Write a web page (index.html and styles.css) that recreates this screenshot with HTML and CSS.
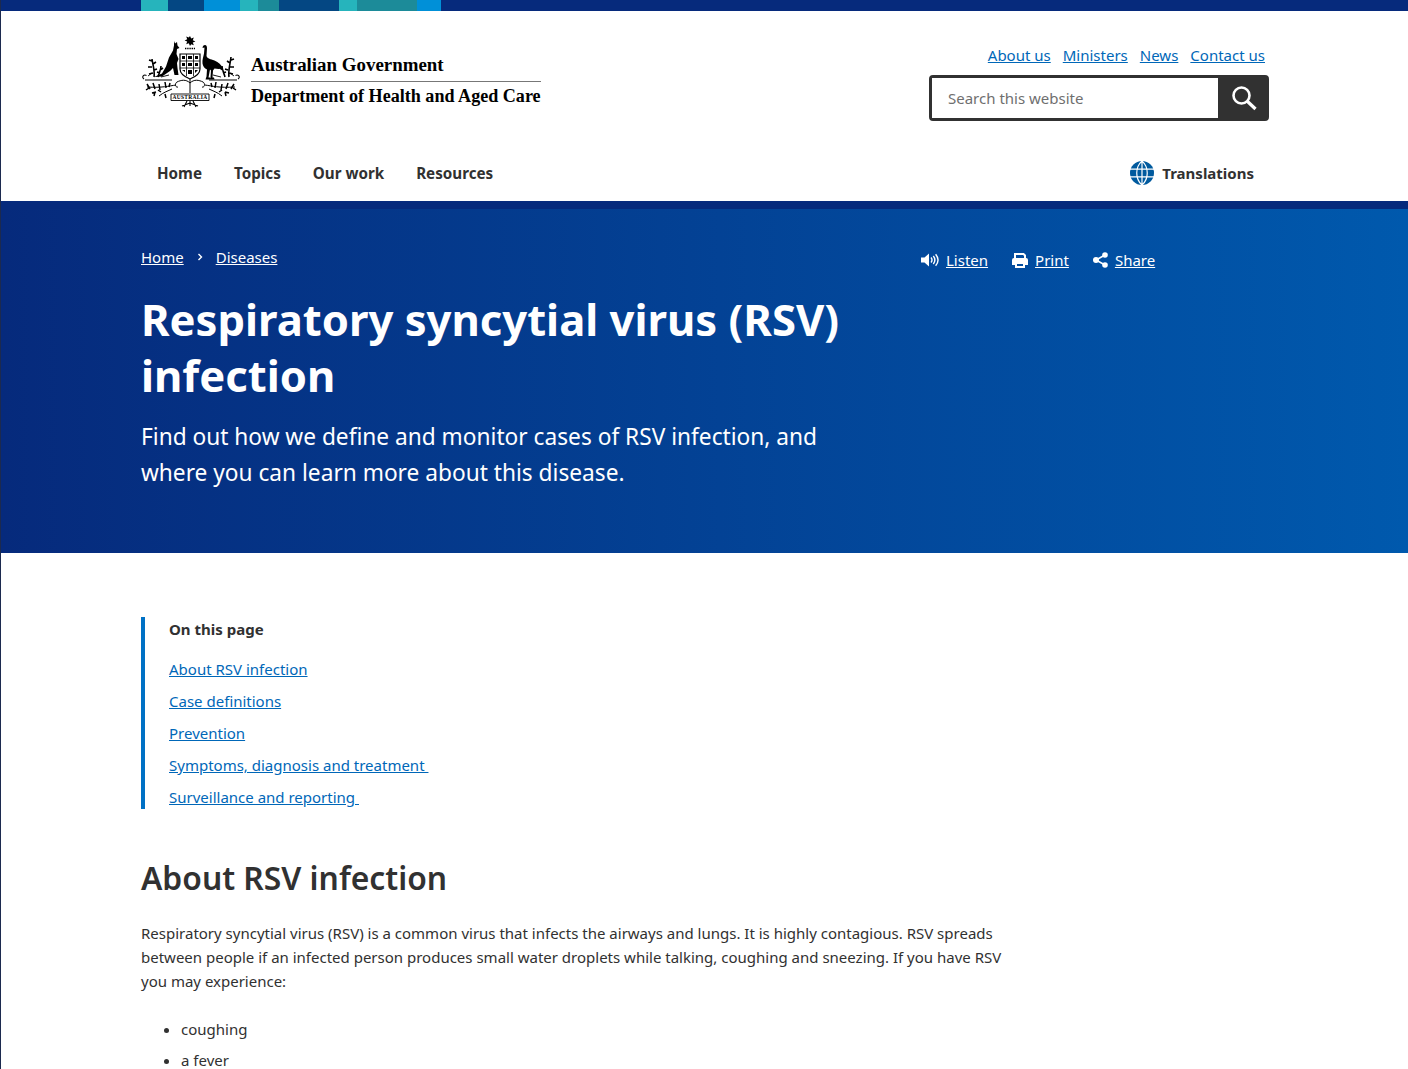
FILE: index.html
```html
<!DOCTYPE html>
<html lang="en">
<head>
    <meta charset="UTF-8">
    <meta name="viewport" content="width=device-width, initial-scale=1.0">
    <title>Respiratory syncytial virus (RSV) infection</title>
    <link rel="stylesheet" href="styles.css">
</head>
<body>

    <!-- Coloured strip -->
    <div class="strip">
        <span class="strip-teal s27"></span>
        <span class="strip-navy s36"></span>
        <span class="strip-blue s36"></span>
        <span class="strip-teal s18"></span>
        <span class="strip-green s21"></span>
        <span class="strip-navy s60"></span>
        <span class="strip-teal s18"></span>
        <span class="strip-green s60"></span>
        <span class="strip-blue s24"></span>
    </div>

    <header class="site-header">
        <div class="container header-top">
            <a class="logo" href="#">
                <svg class="crest" viewBox="0 0 100 73" aria-hidden="true">
                    <!-- star -->
                    <path d="M49 1l1.200 2.600 2.600-1-1 2.600 2.600 1.200-2.600 1.200 1 2.600-2.600-1L49 11l-1.200-2.800-2.600 1 1-2.600-2.600-1.200 2.600-1.200-1-2.600 2.600 1z" fill="#000"/>
                    <path d="M44 13.500h10" stroke="#000" stroke-width="1.400" stroke-dasharray="1.400 .8" fill="none"/>
                    <!-- kangaroo -->
                    <path d="M33 6l1 2.500L36 7l.5 3.500 2 2.500-2.500 1-.5 5 2 5-1.500 4 .5 5 1 7h-4l-1.500-7-3 3-8 5.500-8 .5 8-3.500 4-7 3-9 4-7 1-5z" fill="#000"/>
                    <!-- emu -->
                    <path d="M62 11c2-2 4-1 4 2l-.5 8c1 3 4 3 8 4.500 4 1.500 7 4.500 8.500 8-3 .5-6 .5-8.500 0l-1.500 2-.5 7h1.500l.5 2h-5l1-2 .5-7-1-1-1.500 8h1.500v2h-4.500l1-3 .5-7c-2.500-1-4-3-4.500-6-.5-4 1-7 1.500-10l.5-6-2 .5z" fill="#000"/>
                    <!-- shield -->
                    <path d="M39 19h20v15c0 5-5 8-10 10-5-2-10-5-10-10z" fill="#fff" stroke="#000" stroke-width="1.200"/>
                    <path d="M39 26h20M39 33h20M45.500 19v22M52.500 19v22" stroke="#000" stroke-width=".8" fill="none"/>
                    <path d="M41 21h3v3h-3zM47 21h4v3h-4zM54 21h3v3h-3zM41 28h3v3h-3zM47 28h4v3h-4zM54 28h3v3h-3zM47 35h4v4h-4zM41 35l3 0 0 2zM54 35h3l-3 3z" fill="#000"/>
                    <!-- scroll line -->
                    <path d="M3 44c-3-2 0-5 2.500-3.500M4 45h27M97 44c3-2 0-5-2.500-3.500M68 45h28" stroke="#000" stroke-width="1.100" fill="none"/>
                    <!-- upper foliage -->
                    <g stroke="#000" fill="none">
                        <path d="M13 42c1-6-1-11-2-18M17 42c1-4 3-7 3-11M11 26l-3-1M12 29l3-2M11 32l-4 0M13 35l3-1M12 38l-4 1M19 35l3-2M19 38l-3-1M88 42c-1-6 1-12 2-20M84 42c-1-4-3-7-3-11M90 25l3-1M89 28l-3-2M89 32l4 0M87 35l-3-1M88 38l4 1M82 35l-3-2M82 38l3-1" stroke-width="1.600"/>
                        <path d="M20 42l8-2M80 42l-8-2M7 41l4-3M93 41l-4-3" stroke-width=".9"/>
                    </g>
                    <!-- lower foliage -->
                    <g stroke="#000" fill="none">
                        <path d="M49 44v14M49 48c-4-4-9-3-13-1-3 2-1 6 1 5M49 48c4-4 9-3 13-1 3 2 1 6-1 5" stroke-width="1"/>
                        <path d="M35 50c-7 1-14 3-29 2M64 50c7 1 14 3 30 2M31 54c-4 2-8 3-13 7M68 54c4 2 8 3 13 7" stroke-width="1"/>
                        <path d="M6 49l3 5M12 48l2 6M18 49l1 6M24 47l1 6M29 48l-1 4M5 55l3-2M93 49l-3 5M87 48l-2 6M81 49l-1 6M75 47l-1 6M70 48l1 4M95 55l-3-2M20 57l-3-2M24 59l1 4M14 57l-1 4M11 58l4-1M78 57l3-2M74 59l-1 4M84 57l1 4M88 58l-4-1" stroke-width="1.500"/>
                    </g>
                    <!-- motto banner -->
                    <path d="M30 59h38v6.500H30z" fill="#fff" stroke="#000" stroke-width=".9"/>
                    <text class="crest-motto" x="49" y="64.300" text-anchor="middle">AUSTRALIA</text>
                    <path d="M49 66v5M49 68l-8 3M49 68l8 3M46 66l-3 6M52 66l3 6" stroke="#000" stroke-width="1.100" fill="none"/>
                </svg>
                <span class="logo-text">
                    <span class="logo-gov">Australian Government</span>
                    <span class="logo-dept">Department of Health and Aged Care</span>
                </span>
            </a>
            <div class="header-right">
                <ul class="util-links">
                    <li><a href="#">About us</a></li>
                    <li><a href="#">Ministers</a></li>
                    <li><a href="#">News</a></li>
                    <li><a href="#">Contact us</a></li>
                </ul>
                <form class="search">
                    <input type="text" placeholder="Search this website">
                    <button type="button" aria-label="Search">
                        <svg viewBox="0 0 26 26" width="26" height="26"><circle cx="10.500" cy="10.500" r="8" fill="none" stroke="#fff" stroke-width="2.600"/><path d="M16 16l8.500 8" stroke="#fff" stroke-width="3.200" fill="none"/></svg>
                    </button>
                </form>
            </div>
        </div>
        <nav class="container main-nav">
            <div class="nav-left">
                <a href="#">Home</a>
                <a href="#">Topics</a>
                <a href="#">Our work</a>
                <a href="#">Resources</a>
            </div>
            <a class="translations" href="#">
                <svg viewBox="0 0 24 24" width="24" height="24">
                    <circle cx="12" cy="12" r="12" fill="#005a9e"/>
                    <path d="M0 8.200h24M0 15.800h24M12 0v24M12 0C5 6 5 18 12 24M12 0c7 6 7 18 0 24" stroke="#fff" stroke-width="1.200" fill="none"/>
                </svg>
                Translations
            </a>
        </nav>
    </header>

    <section class="hero">
        <div class="container hero-inner">
            <div class="hero-main">
                <div class="breadcrumb">
                    <a href="#">Home</a>
                    <svg viewBox="0 0 6 8" width="6" height="8"><path d="M1.500 1l3 3-3 3" fill="none" stroke="#fff" stroke-width="1.400"/></svg>
                    <a href="#">Diseases</a>
                </div>
                <h1>Respiratory syncytial virus (RSV) infection</h1>
                <p class="lead">Find out how we define and monitor cases of RSV infection, and where you can learn more about this disease.</p>
            </div>
            <div class="hero-tools">
                <a href="#">
                    <svg viewBox="0 0 18 14" width="18" height="14"><path d="M0 4.500h3.500L8 .5v13l-4.500-4H0z" fill="#fff"/><path d="M10 4.500c1.200 1.500 1.200 3.500 0 5M12.300 3c2 2.500 2 5.500 0 8M14.600 1.200c3 3.500 3 8 0 11.600" fill="none" stroke="#fff" stroke-width="1.400"/></svg>
                    <span>Listen</span>
                </a>
                <a href="#">
                    <svg viewBox="0 0 16 15" width="16" height="15"><path d="M3 5.500V1h8.500L13 2.500v3" fill="none" stroke="#fff" stroke-width="2"/><path d="M2 5h12a2 2 0 0 1 2 2v5h-3v-3H3v3H0V7a2 2 0 0 1 2-2z" fill="#fff"/><path d="M4 10h8v4H4z" fill="none" stroke="#fff" stroke-width="2"/></svg>
                    <span>Print</span>
                </a>
                <a href="#">
                    <svg viewBox="0 0 15 16" width="15" height="16"><circle cx="3" cy="8" r="3" fill="#fff"/><circle cx="12" cy="3" r="2.800" fill="#fff"/><circle cx="12" cy="13" r="2.800" fill="#fff"/><path d="M3 8l9-5M3 8l9 5" stroke="#fff" stroke-width="1.500"/></svg>
                    <span>Share</span>
                </a>
            </div>
        </div>
    </section>

    <main class="container content">
        <div class="on-this-page">
            <h2>On this page</h2>
            <ul>
                <li><a href="#about">About RSV infection</a></li>
                <li><a href="#">Case definitions</a></li>
                <li><a href="#">Prevention</a></li>
                <li><a href="#">Symptoms, diagnosis and treatment&nbsp;</a></li>
                <li><a href="#">Surveillance and reporting&nbsp;</a></li>
            </ul>
        </div>

        <h2 class="section-title" id="about">About RSV infection</h2>
        <p class="body-text">Respiratory syncytial virus (RSV) is a common virus that infects the airways and lungs. It is highly contagious. RSV spreads between people if an infected person produces small water droplets while talking, coughing and sneezing. If you have RSV you may experience:</p>
        <ul class="symptoms">
            <li>coughing</li>
            <li>a fever</li>
        </ul>
    </main>

</body>
</html>
```

FILE: styles.css
```css
html, body {
    height: 1069px;
    overflow: hidden;
}

body {
    margin: 0;
    padding: 0;
    font-family: "Noto Sans", Arial, sans-serif;
    color: #313131;
    background-color: white;
    border-left: 1px solid #1c2a4f;
}

a {
    color: #0067b8;
}

.container {
    width: 1128px;
    margin-left: 140px;
}

/* Coloured strip */
.strip {
    display: flex;
    height: 11px;
    padding-left: 140px;
    background-color: #062a7c;
}

.strip-teal { background-color: #26b4bc; }
.strip-navy { background-color: #044783; }
.strip-blue { background-color: #0090d8; }
.strip-green { background-color: #1c8b99; }

.s18 { width: 18px; }
.s21 { width: 21px; }
.s24 { width: 24px; }
.s27 { width: 27px; }
.s36 { width: 36px; }
.s60 { width: 60px; }

/* Header */
.site-header {
    height: 190px;
}

.header-top {
    display: flex;
    justify-content: space-between;
    height: 139px;
}

.logo {
    display: flex;
    align-items: flex-start;
    margin-top: 24px;
    color: #000;
    text-decoration: none;
}

.crest {
    width: 100px;
    height: 73px;
}

.crest-motto {
    font-family: "Liberation Serif", serif;
    font-size: 5.500px;
    font-weight: bold;
    letter-spacing: .3px;
}

.logo-text {
    display: flex;
    flex-direction: column;
    margin-left: 10px;
    margin-top: 18px;
    width: 290px;
    font-family: "Liberation Serif", "Times New Roman", serif;
    font-weight: bold;
    white-space: nowrap;
}

.logo-gov {
    font-size: 18.900px;
    line-height: 24px;
    padding-bottom: 4px;
    border-bottom: 1.500px solid #777;
}

.logo-dept {
    font-size: 18.100px;
    line-height: 22px;
    padding-top: 3px;
}

.header-right {
    display: flex;
    flex-direction: column;
    align-items: flex-end;
    width: 340px;
}

.util-links {
    display: flex;
    gap: 12px;
    list-style: none;
    margin: 0;
    padding: 34px 4px 0 0;
    font-size: 15px;
    line-height: 21px;
}

.search {
    display: flex;
    width: 340px;
    height: 46px;
    margin-top: 9px;
    box-sizing: border-box;
    border: 3px solid #313131;
    border-radius: 4px;
}

.search input {
    flex: 1;
    min-width: 0;
    border: none;
    outline: none;
    padding: 0 16px;
    font-family: inherit;
    font-size: 15px;
    color: #313131;
}

.search input::placeholder {
    color: #6f6f6f;
    opacity: 1;
}

.search button {
    display: flex;
    align-items: center;
    justify-content: center;
    width: 48px;
    padding: 0 0 0 4px;
    border: none;
    background-color: #313131;
}

.main-nav {
    display: flex;
    justify-content: space-between;
    align-items: center;
    height: 46px;
    font-size: 15.200px;
    font-weight: 700;
}

.main-nav a {
    color: #313131;
    text-decoration: none;
}

.nav-left {
    display: flex;
    gap: 32px;
    padding-left: 16px;
}

.translations {
    display: flex;
    align-items: center;
    gap: 8px;
    padding-right: 15px;
    font-size: 15px;
}

/* Hero */
.hero {
    height: 344px;
    border-top: 8px solid #062a7c;
    background: linear-gradient(90deg, #062a7c 0%, #0059ad 100%);
    color: white;
}

.hero a {
    color: white;
}

.hero-inner {
    display: flex;
}

.hero-main {
    width: 720px;
}

.breadcrumb {
    display: flex;
    align-items: center;
    gap: 13px;
    margin-top: 37px;
    font-size: 15px;
    line-height: 22px;
}

.hero h1 {
    margin: 23px 0 0;
    font-size: 43.600px;
    line-height: 56px;
    font-weight: 700;
}

.lead {
    margin: 16px 0 0;
    font-size: 22.700px;
    line-height: 36px;
}

.hero-tools {
    display: flex;
    gap: 24px;
    margin: 40px 0 0 60px;
    font-size: 15px;
    line-height: 22px;
    height: 22px;
}

.hero-tools a {
    display: flex;
    align-items: center;
    gap: 7px;
    text-decoration: none;
}

.hero-tools span {
    text-decoration: underline;
}

/* Content */
.content {
    padding-top: 64px;
}

.on-this-page {
    border-left: 4px solid #0071c5;
    padding-left: 24px;
    height: 192px;
}

.on-this-page h2 {
    margin: 0;
    font-size: 15px;
    line-height: 24px;
    font-weight: 700;
}

.on-this-page ul {
    list-style: none;
    margin: 16px 0 0;
    padding: 0;
    font-size: 15px;
}

.on-this-page li {
    line-height: 24px;
    margin-bottom: 8px;
}

.section-title {
    margin: 47px 0 0;
    font-size: 31.800px;
    line-height: 44px;
    font-weight: 600;
}

.body-text {
    width: 880px;
    margin: 21px 0 0;
    font-size: 15px;
    line-height: 24px;
}

.symptoms {
    margin: 24px 0 0;
    padding-left: 40px;
    font-size: 15px;
}

.symptoms li {
    line-height: 24px;
    margin-bottom: 7px;
}
```
